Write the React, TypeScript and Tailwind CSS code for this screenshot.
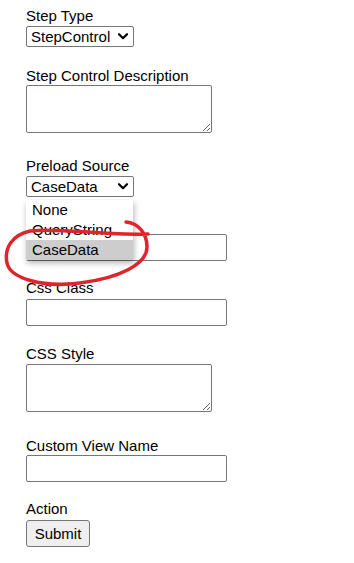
import React from "react";

const font = { fontFamily: '"Liberation Sans", Arial, sans-serif' };

function Chevron() {
  return (
    <svg width="10" height="7" viewBox="0 0 10 7" className="shrink-0">
      <polyline points="1,1.2 5,5.2 9,1.2" fill="none" stroke="#000" strokeWidth="2.2" strokeLinecap="round" strokeLinejoin="round" />
    </svg>
  );
}

function FakeSelect({ value }: { value: string }) {
  return (
    <div className="mt-[2px] flex h-[21px] w-[108px] items-center justify-between rounded-[2px] border border-[#767676] bg-white pl-[4px] pr-[5px]">
      <span className="text-[15px] leading-[19px] text-black">{value}</span>
      <Chevron />
    </div>
  );
}

function Label({ children, className = "" }: { children?: React.ReactNode; className?: string }) {
  return <div className={`h-[17px] text-[15px] leading-[17px] text-black ${className}`}>{children}</div>;
}

export default function App() {
  return (
    <div className="relative h-[563px] w-[354px] overflow-hidden bg-white pl-[26px] pt-[7px]" style={font}>
      <div className="flex flex-col items-start">
        {/* Step Type */}
        <Label>Step Type</Label>
        <FakeSelect value="StepControl" />

        {/* Step Control Description */}
        <Label className="mt-[20px]">Step Control Description</Label>
        <textarea className="mt-[1px] block h-[48px] w-[186px] rounded-[2px] border border-[#767676] bg-white" />

        {/* Preload Source */}
        <Label className="mt-[24px]">Preload Source</Label>
        <div className="relative">
          <FakeSelect value="CaseData" />
          <div className="absolute left-0 top-[26px] z-10 w-[107px] bg-white shadow-[1px_3px_6px_rgba(0,0,0,0.3)]">
            <div className="h-[20px] pl-[6px] text-[15px] leading-[20px] text-black">None</div>
            <div className="h-[20px] pl-[6px] text-[15px] leading-[20px] text-black">QueryString</div>
            <div className="h-[20px] bg-[#cdcdcd] pl-[6px] text-[15px] leading-[20px] text-black">CaseData</div>
          </div>
        </div>

        {/* hidden field under popup */}
        <Label className="mt-[18px]"></Label>
        <input className="mt-[2px] block h-[27px] w-[201px] rounded-[2px] border border-[#767676] bg-white" />

        {/* Css Class */}
        <Label className="mt-[18px]">Css Class</Label>
        <input className="mt-[3px] block h-[27px] w-[201px] rounded-[2px] border border-[#767676] bg-white" />

        {/* CSS Style */}
        <Label className="mt-[19px]">CSS Style</Label>
        <textarea className="mt-[2px] block h-[48px] w-[186px] rounded-[2px] border border-[#767676] bg-white" />

        {/* Custom View Name */}
        <Label className="mt-[25px]">Custom View Name</Label>
        <input className="mt-[1px] block h-[27px] w-[201px] rounded-[2px] border border-[#767676] bg-white" />

        {/* Action */}
        <Label className="mt-[18px]">Action</Label>
        <button className="mt-[3px] h-[27px] w-[64px] rounded-[3px] border border-[#767676] bg-[#efefef] text-[15px] leading-[17px] text-black">
          Submit
        </button>
      </div>

      {/* red annotation circle */}
      <svg className="pointer-events-none absolute left-0 top-0 z-20" width="354" height="563" viewBox="0 0 354 563">
        <path
          d="M126,222 C138,223 147,233 147,247 C147,264 120,278 80,283 C42,288 10,278 7,263 C4,248 12,235 30,231 C60,227 100,236 148,234"
          fill="none"
          stroke="#e0242b"
          strokeWidth="3.5"
          strokeLinecap="round"
          strokeLinejoin="round"
        />
      </svg>
    </div>
  );
}
